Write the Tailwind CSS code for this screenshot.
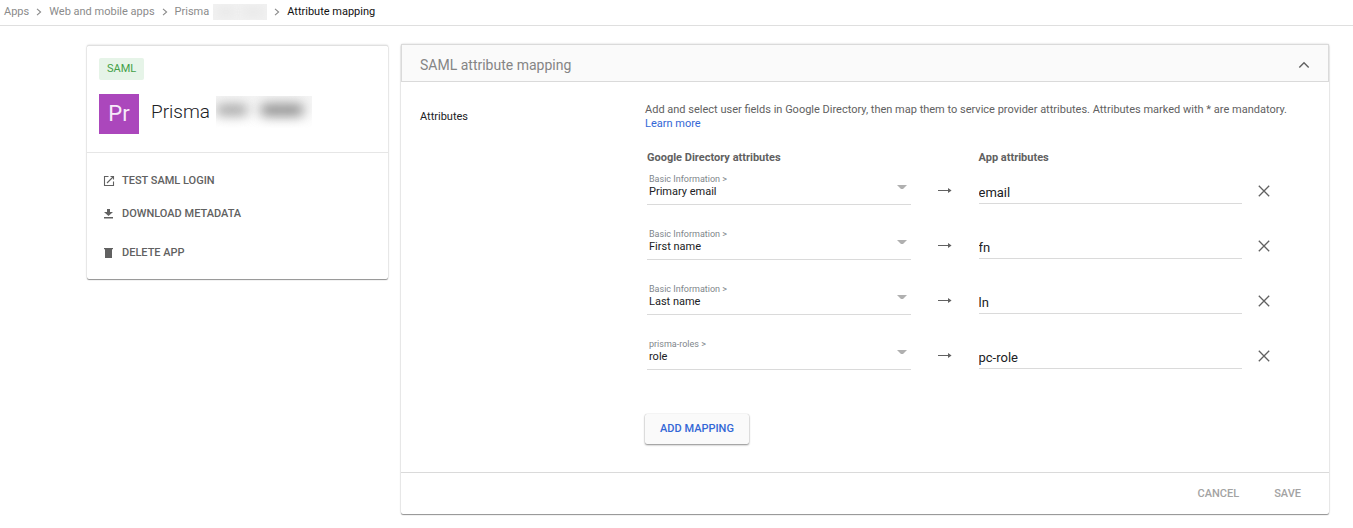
<!DOCTYPE html>
<html lang="en">
<head>
<meta charset="utf-8">
<meta name="viewport" content="width=device-width, initial-scale=1">
<title>Attribute mapping</title>
<script src="https://cdn.jsdelivr.net/npm/@tailwindcss/browser@4"></script>
</head>
<body class="bg-white font-[Roboto,sans-serif] text-[11px] leading-[14px] text-[#616161]">
<svg class="hidden" aria-hidden="true">
  <symbol id="chevron" viewBox="0 0 6 8"><path d="M1 .8 4.6 4 1 7.2" fill="none" stroke="currentColor" stroke-width="1.1"/></symbol>
  <symbol id="arrow" viewBox="0 0 14 8"><path d="M0 3h10V1l3.6 2.5L10 6V4H0z" fill="currentColor"/></symbol>
  <symbol id="close" viewBox="0 0 12 12"><path d="M.8.8l10.4 10.4M11.2.8.8 11.2" fill="none" stroke="currentColor" stroke-width="1.3"/></symbol>
  <symbol id="caret" viewBox="0 0 10 5"><path d="M0 0h10L6 4H4z" fill="currentColor"/></symbol>
</svg>

<nav aria-label="Breadcrumb" class="border-b border-[#dfdfdf] pt-1 pb-[5px] pl-1">
  <ol class="flex items-center text-[#8b8b8b]">
    <li><a href="#">Apps</a></li>
    <li class="mx-[7px]"><svg class="h-2 w-1.5"><use href="#chevron"/></svg></li>
    <li><a href="#">Web and mobile apps</a></li>
    <li class="mx-[7px]"><svg class="h-2 w-1.5"><use href="#chevron"/></svg></li>
    <li><a href="#" class="flex items-center gap-1">Prisma
      <span class="flex h-4 w-[54px] items-center justify-around overflow-hidden bg-[#f1f1f1]"><span class="h-1.5 w-4 bg-[#e6e6e6] blur-[4px]"></span><span class="h-1.5 w-5 bg-[#e6e6e6] blur-[4px]"></span></span></a></li>
    <li class="mx-[7px]"><svg class="h-2 w-1.5"><use href="#chevron"/></svg></li>
    <li aria-current="page" class="text-[#111111]">Attribute mapping</li>
  </ol>
</nav>

<div class="flex items-start gap-[13px] pt-[18px] pr-6 pb-3 pl-[87px]">
  <aside class="mt-px w-[301px] shrink-0 rounded-xs border-t border-[#e0e0e0] bg-white shadow-[0_1px_1px_rgba(0,0,0,0.4),0_0_2px_rgba(0,0,0,0.22)]">
    <div class="border-b border-[#e6e6e6] px-3 pt-3 pb-[18px]">
      <span class="inline-block rounded-xs bg-[#e6f4e8] px-2 py-1 text-[#43a047]">SAML</span>
      <div class="mt-3.5 flex items-center">
        <div class="flex h-10 w-10 items-center justify-center bg-[#ab47bc] text-[22px] leading-10 text-[#f7eaf9]">Pr</div>
        <h1 class="mb-1 ml-3 text-[19px] leading-6 font-light text-[#202124]">Prisma</h1>
        <span class="mb-1 ml-1.5 flex h-8 w-24 items-center gap-3 overflow-hidden bg-linear-to-b from-[#f4f4f4] to-white"><span class="mb-1 h-2.5 w-8 rounded-full bg-[#9c9c9c] blur-[6px]"></span><span class="mb-1 h-3 w-11 rounded-full bg-[#8c8c8c] blur-[6px]"></span></span>
      </div>
    </div>
    <div class="flex flex-col items-start px-4 pt-[21px] pb-[19px] font-medium">
      <button type="button" class="flex items-center gap-[7px]"><svg class="h-3 w-3" viewBox="0 0 12 12"><path d="M5.5 1.5h-4v9h9v-4M7.5 1.5h3v3M10.5 1.5 4 8" fill="none" stroke="currentColor" stroke-width="1.1"/></svg>TEST SAML LOGIN</button>
      <button type="button" class="mt-[19px] flex items-center gap-[7px]"><svg class="h-3 w-3" viewBox="0 0 12 12"><path d="M4 1h3v3h3L5.5 8 1 4h3zM1 9h9v1.5H1z" fill="currentColor"/></svg>DOWNLOAD METADATA</button>
      <button type="button" class="mt-[25px] flex items-center gap-[7px]"><svg class="h-3 w-3" viewBox="0 0 12 12"><path d="M1 1h9v1.3H1zM2 2.3h7V11H2z" fill="currentColor"/></svg>DELETE APP</button>
    </div>
  </aside>

  <main class="min-w-0 flex-1 rounded-xs bg-white shadow-[0_1px_1px_rgba(0,0,0,0.4),0_0_2px_rgba(0,0,0,0.22)]">
    <header class="flex items-center justify-between border border-[#dadada] bg-[#fafafa] pt-[10px] pr-[18px] pb-1.5 pl-[18px]">
      <h2 class="text-[14px] leading-5 text-[#858585]">SAML attribute mapping</h2>
      <button type="button" aria-label="Collapse section"><svg class="h-3 w-3" viewBox="0 0 12 12"><path d="M1.3 8.5 6 3.8l4.7 4.7" fill="none" stroke="#616161" stroke-width="1.4"/></svg></button>
    </header>
    <form>
      <div class="flex pt-[21px] pb-7 pl-[19px]">
        <h3 class="w-[225px] shrink-0 pt-[7px] text-[#202124]">Attributes</h3>
        <div class="min-w-0 flex-1">
          <p class="pr-5">Add and select user fields in Google Directory, then map them to service provider attributes. Attributes marked with * are mandatory.<br><a href="#" class="text-[#3367d6]">Learn more</a></p>
          <div class="mt-5 mr-[43px] ml-0.5 flex flex-col gap-[23px]">
            <div class="-mb-[15px] grid grid-cols-[1fr_68px_1fr_44px] font-bold">
              <div>Google Directory attributes</div><div></div><div>App attributes</div>
            </div>
            <div class="grid grid-cols-[1fr_68px_1fr_44px]">
              <div class="relative border-b border-[#dadada] pb-[5px]">
                <label for="g1" class="block pl-0.5 text-[9px] leading-3 text-[#80868b]">Basic Information &gt;</label>
                <select id="g1" class="block h-3.5 w-full appearance-none pl-0.5 text-[11px] leading-[14px] text-[#202124]"><option>Primary email</option></select>
                <svg class="pointer-events-none absolute top-3 right-1 h-[5px] w-2.5 text-[#b0b0b0]"><use href="#caret"/></svg>
              </div>
              <svg class="mt-3.5 h-2 w-3.5 justify-self-center"><use href="#arrow"/></svg>
              <input aria-label="App attribute for Primary email" value="email" class="mb-px min-w-0 border-b border-[#dadada] pt-2.5 text-[13px] text-[#202124]">
              <button type="button" aria-label="Remove Primary email" class="mt-3 self-start justify-self-center"><svg class="h-3 w-3"><use href="#close"/></svg></button>
            </div>
            <div class="grid grid-cols-[1fr_68px_1fr_44px]">
              <div class="relative border-b border-[#dadada] pb-[5px]">
                <label for="g2" class="block pl-0.5 text-[9px] leading-3 text-[#80868b]">Basic Information &gt;</label>
                <select id="g2" class="block h-3.5 w-full appearance-none pl-0.5 text-[11px] leading-[14px] text-[#202124]"><option>First name</option></select>
                <svg class="pointer-events-none absolute top-3 right-1 h-[5px] w-2.5 text-[#b0b0b0]"><use href="#caret"/></svg>
              </div>
              <svg class="mt-3.5 h-2 w-3.5 justify-self-center"><use href="#arrow"/></svg>
              <input aria-label="App attribute for First name" value="fn" class="mb-px min-w-0 border-b border-[#dadada] pt-2.5 text-[13px] text-[#202124]">
              <button type="button" aria-label="Remove First name" class="mt-3 self-start justify-self-center"><svg class="h-3 w-3"><use href="#close"/></svg></button>
            </div>
            <div class="grid grid-cols-[1fr_68px_1fr_44px]">
              <div class="relative border-b border-[#dadada] pb-[5px]">
                <label for="g3" class="block pl-0.5 text-[9px] leading-3 text-[#80868b]">Basic Information &gt;</label>
                <select id="g3" class="block h-3.5 w-full appearance-none pl-0.5 text-[11px] leading-[14px] text-[#202124]"><option>Last name</option></select>
                <svg class="pointer-events-none absolute top-3 right-1 h-[5px] w-2.5 text-[#b0b0b0]"><use href="#caret"/></svg>
              </div>
              <svg class="mt-3.5 h-2 w-3.5 justify-self-center"><use href="#arrow"/></svg>
              <input aria-label="App attribute for Last name" value="ln" class="mb-px min-w-0 border-b border-[#dadada] pt-2.5 text-[13px] text-[#202124]">
              <button type="button" aria-label="Remove Last name" class="mt-3 self-start justify-self-center"><svg class="h-3 w-3"><use href="#close"/></svg></button>
            </div>
            <div class="grid grid-cols-[1fr_68px_1fr_44px]">
              <div class="relative border-b border-[#dadada] pb-[5px]">
                <label for="g4" class="block pl-0.5 text-[9px] leading-3 text-[#80868b]">prisma-roles &gt;</label>
                <select id="g4" class="block h-3.5 w-full appearance-none pl-0.5 text-[11px] leading-[14px] text-[#202124]"><option>role</option></select>
                <svg class="pointer-events-none absolute top-3 right-1 h-[5px] w-2.5 text-[#b0b0b0]"><use href="#caret"/></svg>
              </div>
              <svg class="mt-3.5 h-2 w-3.5 justify-self-center"><use href="#arrow"/></svg>
              <input aria-label="App attribute for role" value="pc-role" class="mb-px min-w-0 border-b border-[#dadada] pt-2.5 text-[13px] text-[#202124]">
              <button type="button" aria-label="Remove role" class="mt-3 self-start justify-self-center"><svg class="h-3 w-3"><use href="#close"/></svg></button>
            </div>
          </div>
          <button type="button" class="mt-11 h-[30px] w-[104px] rounded-xs bg-[#fafafa] font-medium text-[#3367d6] shadow-[0_1px_2px_rgba(0,0,0,0.45),0_0_1px_rgba(0,0,0,0.2)]">ADD MAPPING</button>
        </div>
      </div>
      <footer class="flex justify-end gap-[35px] border-t border-[#dadada] pt-3.5 pr-7 pb-[13px] font-medium text-[#a3a3a3]">
        <button type="button">CANCEL</button>
        <button type="submit">SAVE</button>
      </footer>
    </form>
  </main>
</div>
</body>
</html>
